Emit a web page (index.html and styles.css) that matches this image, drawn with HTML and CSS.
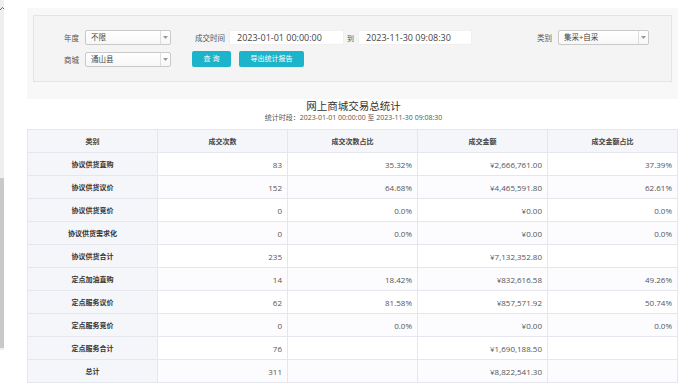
FILE: index.html
```html
<!DOCTYPE html>
<html lang="zh-CN">
<head>
<meta charset="utf-8">
<title>网上商城交易总统计</title>
<link rel="stylesheet" href="styles.css">
</head>
<body>
<div class="page">
  <div class="strip">
    <svg class="strip-caret" width="4" height="5" viewBox="0 0 4 5"><path d="M0 4 L2.5 1.5 L4 3" fill="none" stroke="#666" stroke-width="1"/></svg>
    <div class="strip-thumb"></div>
  </div>
  <div class="main">
    <div class="panel">
      <div class="filter-box">
        <div class="frow">
          <span class="lbl w45">年度</span>
          <div class="select s1"><span class="sel-text">不限</span><span class="sel-arrow"><svg width="5" height="3" viewBox="0 0 5 3"><path d="M0 0 H5 L2.5 3 Z" fill="#999"/></svg></span></div>
          <span class="lbl time-lbl">成交时间</span>
          <div class="input i1">2023-01-01 00:00:00</div>
          <span class="lbl to">到</span>
          <div class="input i2">2023-11-30 09:08:30</div>
          <span class="lbl cat-lbl">类别</span>
          <div class="select s3"><span class="sel-text">集采+自采</span><span class="sel-arrow"><svg width="5" height="3" viewBox="0 0 5 3"><path d="M0 0 H5 L2.5 3 Z" fill="#999"/></svg></span></div>
        </div>
        <div class="frow row2">
          <span class="lbl w45">商城</span>
          <div class="select s1"><span class="sel-text">通山县</span><span class="sel-arrow"><svg width="5" height="3" viewBox="0 0 5 3"><path d="M0 0 H5 L2.5 3 Z" fill="#999"/></svg></span></div>
          <button class="btn b-query">查 询</button>
          <button class="btn b-export">导出统计报告</button>
        </div>
      </div>
    </div>
    <div class="heading">
      <div class="title">网上商城交易总统计</div>
      <div class="subtitle">统计时段：2023-01-01 00:00:00 至 2023-11-30 09:08:30</div>
    </div>
    <table class="stats">
      <thead>
        <tr><th>类别</th><th>成交次数</th><th>成交次数占比</th><th>成交金额</th><th>成交金额占比</th></tr>
      </thead>
      <tbody>
        <tr><th>协议供货直购</th><td>83</td><td>35.32%</td><td>¥2,666,761.00</td><td>37.39%</td></tr>
        <tr><th>协议供货议价</th><td>152</td><td>64.68%</td><td>¥4,465,591.80</td><td>62.61%</td></tr>
        <tr><th>协议供货竞价</th><td>0</td><td>0.0%</td><td>¥0.00</td><td>0.0%</td></tr>
        <tr><th>协议供货需求化</th><td>0</td><td>0.0%</td><td>¥0.00</td><td>0.0%</td></tr>
        <tr><th>协议供货合计</th><td>235</td><td></td><td>¥7,132,352.80</td><td></td></tr>
        <tr><th>定点加油直购</th><td>14</td><td>18.42%</td><td>¥832,616.58</td><td>49.26%</td></tr>
        <tr><th>定点服务议价</th><td>62</td><td>81.58%</td><td>¥857,571.92</td><td>50.74%</td></tr>
        <tr><th>定点服务竞价</th><td>0</td><td>0.0%</td><td>¥0.00</td><td>0.0%</td></tr>
        <tr><th>定点服务合计</th><td>76</td><td></td><td>¥1,690,188.50</td><td></td></tr>
        <tr><th>总计</th><td>311</td><td></td><td>¥8,822,541.30</td><td></td></tr>
      </tbody>
    </table>
  </div>
</div>
</body>
</html>
```
FILE: styles.css
```css
html, body {
  margin: 0;
  padding: 0;
  background: #fff;
  height: 384px;
  overflow: hidden;
}
body {
  font-family: "Open Sans", "Noto Sans CJK SC", sans-serif;
  color: #555;
}
.page {
  display: flex;
  align-items: flex-start;
}
.strip {
  width: 4px;
  height: 350px;
  background: #efefef;
  display: flex;
  flex-direction: column;
  flex-shrink: 0;
}
.strip-caret {
  margin-top: 6px;
  display: block;
}
.strip-thumb {
  margin-top: 167px;
  height: 170px;
  background: #c9c9c9;
}
.main {
  margin-left: 23px;
  width: 651px;
}
.panel {
  background: #f8f8f8;
  margin-top: 8px;
  padding: 7px 6px 17px 6px;
}
.filter-box {
  background: #f4f4f4;
  border: 1px solid #e4e4e4;
  height: 67px;
  padding-top: 14px;
  box-sizing: border-box;
}
.frow {
  display: flex;
  align-items: center;
  height: 15px;
}
.row2 {
  margin-top: 6px;
  height: 16px;
}
.lbl {
  font-size: 7.5px;
  color: #555;
  white-space: nowrap;
}
.w45 {
  width: 45px;
  text-align: right;
  margin-right: 6px;
}
.select {
  height: 15px;
  box-sizing: border-box;
  border: 1px solid #c9c9c9;
  border-radius: 2px;
  background: linear-gradient(#fff, #f7f7f7);
  display: flex;
  align-items: center;
}
.row2 .select {
  height: 15px;
  margin-top: 1px;
}
.s1 { width: 86px; }
.s3 { width: 91px; }
.sel-text {
  flex: 1;
  font-size: 7.5px;
  color: #444;
  padding-left: 5px;
  line-height: 13px;
}
.sel-arrow {
  width: 9px;
  height: 13px;
  border-left: 1px solid #ddd;
  display: flex;
  align-items: center;
  justify-content: center;
}
.sel-arrow svg { display: block; }
.time-lbl {
  margin-left: 24px;
  margin-right: 4px;
}
.input {
  height: 15px;
  box-sizing: border-box;
  background: #fff;
  border: 1px solid #f0f0f0;
  font-size: 9px;
  color: #444;
  padding-left: 7px;
  line-height: 13px;
  white-space: nowrap;
}
.i1 { width: 115px; }
.i2 { width: 114px; }
.to {
  margin-left: 3px;
  margin-right: 4px;
  font-size: 7px;
}
.cat-lbl {
  margin-left: 65px;
  margin-right: 6px;
}
.btn {
  height: 16px;
  border: 0;
  border-radius: 2px;
  background: #1bb4ca;
  color: #fff;
  font-family: "Open Sans", "Noto Sans CJK SC", sans-serif;
  font-size: 7px;
  padding: 0;
  line-height: 16px;
}
.b-query {
  width: 39px;
  margin-left: 21px;
}
.b-export {
  width: 65px;
  margin-left: 8px;
}
.heading {
  text-align: center;
  padding-left: 2px;
}
.title {
  font-size: 10.5px;
  line-height: 14px;
  color: #333;
}
.subtitle {
  font-size: 7px;
  line-height: 10px;
  color: #555;
  margin-bottom: 6px;
}
.stats {
  width: 651px;
  border-collapse: collapse;
  table-layout: fixed;
}
.stats th, .stats td {
  height: 22px;
  padding: 0 5px;
  border: 1px solid #e6e7ee;
  font-size: 7px;
}
.stats thead th {
  background: #f5f6fa;
  color: #444;
  font-weight: bold;
  text-align: center;
}
.stats tbody th {
  background: #f5f6fa;
  color: #333;
  font-weight: bold;
  text-align: center;
}
.stats td {
  text-align: right;
  font-size: 8px;
  color: #555;
  background: #fff;
}
.stats tbody tr:nth-child(even) td {
  background: #fcfcfe;
}
```
